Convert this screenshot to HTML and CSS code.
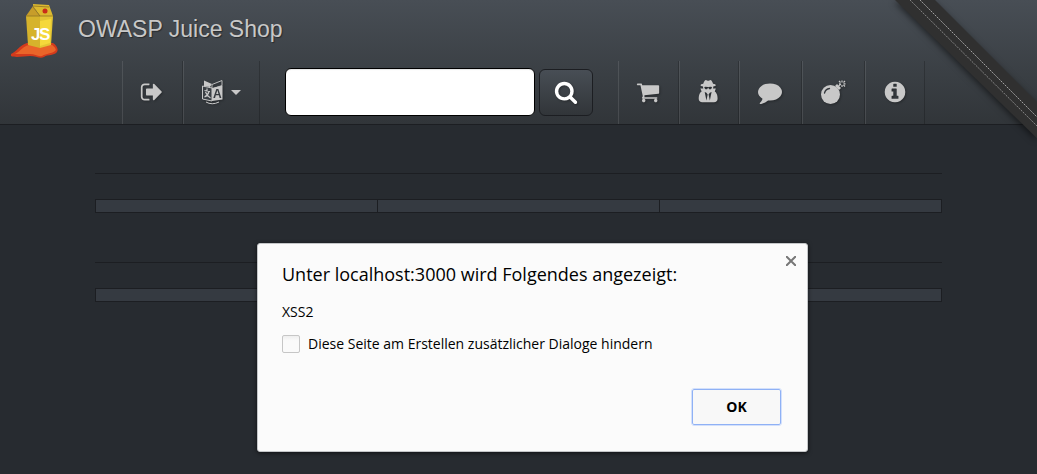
FILE: index.html
```html
<!DOCTYPE html>
<html lang="de">
<head>
<meta charset="utf-8">
<meta name="viewport" content="width=device-width, initial-scale=1">
<title>OWASP Juice Shop</title>
<link rel="stylesheet" href="styles.css">
</head>
<body>
<header class="navbar">
  <a class="brand" href="#">
    <svg class="brand-logo" viewBox="0 0 48 54" aria-hidden="true">
      <path fill="#d33a1c" d="M0 50 C5 48 9 41 16 39 L42 39 C45 41 48 45 46 48 C43 52 37 50 33 53 C29 55 25 52 19 52 C13 52 5 54 0 52Z"/>
      <path fill="#ea6529" d="M4 50 C10 47 12 42 18 41 L41 41 C44 43 46 46 44 47 C40 50 36 49 31 52 C27 53 24 50 19 50Z"/>
      <path fill="#d6b32c" d="M15 12 L29 12 L29 44 L17 41Z"/>
      <path fill="#e3c534" d="M29 12 L42 12 L40 41 L29 44Z"/>
      <path fill="#f5d83b" d="M29 17 L40 15 L39 39 L29 42Z"/>
      <path fill="#c79d2a" d="M22 2 L15 12 L29 12Z"/>
      <path fill="#dcb92f" d="M22 2 L22 0 L38 1 L42 12 L29 12Z"/>
      <path fill="none" stroke="#8f7424" stroke-width=".8" d="M15 12H42 M22 3L29 12 M22 2L38 3"/>
      <circle cx="34" cy="7" r="2.500" fill="#c92d19"/>
      <text class="brand-mark" x="20" y="36">J</text>
      <text class="brand-mark" x="28" y="36">S</text>
    </svg>
    <span class="brand-name">OWASP Juice Shop</span>
  </a>
  <nav class="nav" aria-label="Navigation">
    <ul class="nav-list">
      <li class="nav-item"><a class="nav-link" href="#" aria-label="Logout">
        <svg class="icon" viewBox="0 0 1792 1792"><path d="M704 1440q0 4 1 20t.5 26.5-3 23.5-10 19.500-20.500 6.500h-320q-119 0-203.500-84.500t-84.500-203.500v-704q0-119 84.500-203.500t203.500-84.500h320q13 0 22.500 9.500t9.500 22.500q0 4 1 20t.5 26.500-3 23.500-10 19.500-20.500 6.500h-320q-66 0-113 47t-47 113v704q0 66 47 113t113 47h312l11.500 1 11.500 3 8 5.500 7 9 2 13.500zm928-544q0 26-19 45l-544 544q-19 19-45 19t-45-19-19-45v-288h-448q-26 0-45-19t-19-45v-384q0-26 19-45t45-19h448v-288q0-26 19-45t45-19 45 19l544 544q19 19 19 45z"/></svg>
      </a></li>
      <li class="nav-item"><button class="nav-link nav-link-menu" type="button" aria-label="Sprache">
        <svg class="icon" viewBox="2 1 24 24">
          <path d="M12 5.500 22 1.500V6.500L12 10Z" fill="none" stroke="#c8c8c8" stroke-width=".9"/>
          <path d="M4 1.500 12 5 10 8 4 7Z"/>
          <path d="M2.500 7 12 9V22L2.500 20Z" fill="#3a3f44" stroke="#c8c8c8"/>
          <path d="M12 9 22.500 6.500V20.500L12 22Z"/>
          <path d="M6 23Q12 26.500 19 23" fill="none" stroke="#c8c8c8"/>
          <path d="M4.500 11.500 10 12.500M7 9.500V12M9 12.500Q8 16.500 4.500 18M5.500 13Q7 17 10.500 19" fill="none" stroke="#c8c8c8" stroke-width="1.200"/>
          <text class="icon-letter" x="13" y="19">A</text>
        </svg>
        <span class="caret"></span>
      </button></li>
    </ul>
    <form class="search" role="search">
      <input class="search-input" type="text" aria-label="Suche">
      <button class="search-button" type="button" aria-label="Suchen">
        <svg class="icon icon-search" viewBox="0 0 1792 1792"><path d="M1216 832q0-185-131.500-316.500t-316.500-131.500-316.500 131.500-131.500 316.500 131.500 316.500 316.500 131.500 316.500-131.500 131.500-316.500zm512 832q0 52-38 90t-90 38q-54 0-90-38l-343-342q-179 124-399 124-143 0-273.500-55.500t-225-150-150-225-55.500-273.500 55.500-273.500 150-225 225-150 273.500-55.500 273.500 55.500 225 150 150 225 55.500 273.500q0 220-124 399l343 343q37 37 37 90z"/></svg>
      </button>
    </form>
    <ul class="nav-list">
      <li class="nav-item"><a class="nav-link" href="#" aria-label="Warenkorb">
        <svg class="icon" viewBox="0 0 1792 1792"><path d="M704 1536q0 52-38 90t-90 38-90-38-38-90 38-90 90-38 90 38 38 90zm896 0q0 52-38 90t-90 38-90-38-38-90 38-90 90-38 90 38 38 90zm128-1088v512q0 24-16.500 42.500t-40.500 21.500l-1044 122q13 60 13 70 0 16-24 64h920q26 0 45 19t19 45-19 45-45 19h-1024q-26 0-45-19t-19-45q0-11 8-31.500t16-36 21.500-40 15.500-29.500l-177-823h-204q-26 0-45-19t-19-45 19-45 45-19h256q16 0 28.500 6.500t19.500 15.500 13 24.500 8 26 5.500 29.500 4.500 26h1201q26 0 45 19t19 45z"/></svg>
      </a></li>
      <li class="nav-item"><a class="nav-link nav-link-narrow" href="#" aria-label="Profil">
        <svg class="icon" viewBox="0 0 1792 1792"><path d="M704 1536l96-448-96-128-128-64zm256 0l128-640-128 64-96 128zm160-1010q-2-4-4-6-10-8-96-8-70 0-167 19-7 2-21 2t-21-2q-97-19-167-19-86 0-96 8-2 2-4 6 2 18 4 27 2 3 7.500 6.500t7.500 10.500q2 4 7.500 20.500t7 20.500 7.500 17 8.500 17 9 14 12 13.500 14 9.500 17.500 8 20.500 4 24.500 2q36 0 59-12.500t32.500-30 14.500-34.500 11.500-29.500 17.500-12.500h12q11 0 17.500 12.500t11.500 29.500 14.500 34.500 32.500 30 59 12.500q13 0 24.500-2t20.500-4 17.500-8 14-9.500 12-13.500 9-14 8.500-17 7.500-17 7-20.500 7.500-20.500q2-7 7.500-10.500t7.500-6.500q2-9 4-27zm416 879q0 121-73 190t-194 69h-874q-121 0-194-69t-73-190q0-61 4.500-118t19-125.500 37.500-123.500 63.500-103.500 93.500-74.500l-90-220h214q-22-64-22-128 0-12 2-32-194-40-194-96 0-57 210-99 17-62 51.500-134t70.500-114q32-37 76-37 30 0 84 31t84 31 84-31 84-31q44 0 76 37 36 42 70.500 114t51.500 134q210 42 210 99 0 56-194 96 7 81-20 160h214l-82 225q63 33 107.500 96.500t65.500 143.500 29 151.500 8 148.500z"/></svg>
      </a></li>
      <li class="nav-item"><a class="nav-link nav-link-wide" href="#" aria-label="Feedback">
        <svg class="icon" viewBox="0 0 1792 1792"><path d="M1792 896q0 174-120 321.500t-326 233-450 85.500q-70 0-145-8-198 175-460 242-49 14-114 22-17 2-30.500-9t-17.500-29v-1q-3-4-.5-12t2-10 4.500-9.500l6-9 7-8.500 8-9q7-8 31-34.500t34.500-38 31-39.500 32.500-51 27-59 26-76q-157-89-247.500-220t-90.500-281q0-130 71-248.500t191-204.500 286-136.500 348-50.500q244 0 450 85.500t326 233 120 321.500z"/></svg>
      </a></li>
      <li class="nav-item"><a class="nav-link nav-link-wide" href="#" aria-label="Beschwerde">
        <svg class="icon" viewBox="0 0 24 24">
          <circle cx="9.500" cy="14.500" r="9.500"/>
          <path d="M14 6 16 4 20 8 18 10Z"/>
          <path d="M3.500 13Q4.500 9 8.500 8.500" fill="none" stroke="#35393e" stroke-width="1.300" stroke-linecap="round"/>
          <path d="M17.500 6 20 4M21 .5V2.500M21 5V7M18 1 19.500 2.500M22.500 5 24 6.500M22.500 2.500 24 1M18 3.800H19.500M22.500 3.800H24.500" fill="none" stroke="#c8c8c8" stroke-width="1.200"/>
        </svg>
      </a></li>
      <li class="nav-item"><a class="nav-link nav-link-narrow" href="#" aria-label="Über uns">
        <svg class="icon" viewBox="0 0 1792 1792"><path d="M1152 1376v-160q0-14-9-23t-23-9h-96v-512q0-14-9-23t-23-9h-320q-14 0-23 9t-9 23v160q0 14 9 23t23 9h96v320h-96q-14 0-23 9t-9 23v160q0 14 9 23t23 9h448q14 0 23-9t9-23zm-128-896v-160q0-14-9-23t-23-9h-192q-14 0-23 9t-9 23v160q0 14 9 23t23 9h192q14 0 23-9t9-23zm640 416q0 209-103 385.500t-279.500 279.500-385.500 103-385.500-103-279.500-279.500-103-385.500 103-385.500 279.500-279.500 385.500-103 385.500 103 279.500 279.500 103 385.500z"/></svg>
      </a></li>
    </ul>
  </nav>
</header>

<svg class="ribbon" viewBox="0 0 150 150" aria-hidden="true">
  <path class="ribbon-band" d="M8 0H48L160 112V148Z"/>
  <path class="ribbon-stitch ribbon-stitch-dim" d="M23 0 150 126"/>
  <path class="ribbon-stitch" d="M33 0 150 117"/>
</svg>

<main class="content">
  <section class="panel">
    <hr class="rule">
    <table class="grid-table"><tbody><tr><th></th><th></th><th></th></tr></tbody></table>
  </section>
  <section class="panel">
    <hr class="rule">
    <table class="grid-table"><tbody><tr><th></th><th></th><th></th></tr></tbody></table>
  </section>
</main>

<div class="overlay">
  <div class="dialog" role="alertdialog" aria-labelledby="dialog-title" aria-describedby="dialog-message">
    <button class="dialog-close" type="button" aria-label="Schließen">
      <svg class="close-icon" viewBox="0 0 10 10"><path d="M0 0 10 10M10 0 0 10"/></svg>
    </button>
    <h1 class="dialog-title" id="dialog-title">Unter localhost:3000 wird Folgendes angezeigt:</h1>
    <p class="dialog-message" id="dialog-message">XSS2</p>
    <div class="dialog-option">
      <input class="checkbox" type="checkbox" id="suppress">
      <label for="suppress">Diese Seite am Erstellen zusätzlicher Dialoge hindern</label>
    </div>
    <div class="dialog-actions"><button class="dialog-ok" type="button">OK</button></div>
  </div>
</div>
</body>
</html>
```
FILE: styles.css
```css
* { box-sizing: border-box; }

body {
  margin: 0;
  min-height: 100vh;
  position: relative;
  overflow-x: hidden;
  background: #272b30;
  color: #c8c8c8;
  font-family: "Liberation Sans", Arial, sans-serif;
}

.navbar {
  background: linear-gradient(#484e55, #3a3f44 60%, #313539);
  border-bottom: 1px solid #1c1e22;
}

.brand {
  display: flex;
  align-items: center;
  gap: 19px;
  width: max-content;
  height: 61px;
  padding-left: 11px;
  color: #c8c8c8;
  text-decoration: none;
  text-shadow: 1px 1px 1px rgba(0, 0, 0, .4);
}

.brand-logo { width: 48px; height: 54px; }

.brand-mark {
  fill: #fff;
  font-size: 17px;
  font-weight: bold;
  text-shadow: none;
}

.brand-name { font-size: 23px; line-height: 28px; padding-bottom: 4px; }

.nav {
  display: flex;
  align-items: center;
  justify-content: center;
  gap: 25px;
  height: 63px;
  padding-left: 9px;
}

.nav-list {
  display: flex;
  align-self: stretch;
  margin: 0;
  padding: 0;
  list-style: none;
}

.nav-item {
  display: flex;
  padding-bottom: 1px;
  border-left: 1px solid rgba(255, 255, 255, .1);
  border-right: 1px solid rgba(0, 0, 0, .2);
}

.nav-link {
  display: flex;
  align-items: center;
  justify-content: center;
  width: 59px;
  padding: 0;
  border: 0;
  background: none;
}

.nav-link-menu { width: 75px; gap: 5px; }
.nav-link-narrow { width: 58px; }
.nav-link-wide { width: 61px; }

.icon {
  width: 24px;
  height: 24px;
  overflow: visible;
  fill: #c8c8c8;
  filter: drop-shadow(1px 1px 1px rgba(0, 0, 0, .3));
}

.icon-search { fill: #fff; }

.icon-letter {
  fill: #35393e;
  font-size: 12px;
  font-weight: bold;
  font-family: "Liberation Sans", Arial, sans-serif;
}

.caret {
  border-top: 5px solid #c8c8c8;
  border-left: 5px solid transparent;
  border-right: 5px solid transparent;
}

.search { display: flex; align-items: flex-end; gap: 4px; padding-bottom: 2px; }

.search-input {
  width: 250px;
  height: 48px;
  padding: 8px 12px;
  border: 1px solid #000;
  border-radius: 6px;
  background: #fff;
  box-shadow: inset 0 1px 1px rgba(0, 0, 0, .1);
  font-size: 18px;
}

.search-button {
  display: flex;
  align-items: center;
  justify-content: center;
  width: 54px;
  height: 47px;
  padding: 0;
  border: 1px solid #1c1e22;
  border-radius: 6px;
  background: linear-gradient(#484e55, #3a3f44 60%, #313539);
}

.ribbon {
  position: absolute;
  top: 0;
  right: 0;
  width: 150px;
  height: 150px;
  filter: drop-shadow(-1px 2px 3px rgba(0, 0, 0, .5));
}

.ribbon-band { fill: #303030; }
.ribbon-stitch { stroke: #a0a0a0; stroke-width: 1; stroke-dasharray: 2 1; }
.ribbon-stitch-dim { stroke: #858585; }

.content { padding: 0 95px; }
.panel { padding-top: 48px; }
.panel + .panel { padding-top: 49px; }

.rule {
  height: 1px;
  margin: 0 0 25px;
  border: 0;
  background: #1c1e22;
}

.grid-table {
  width: 100%;
  table-layout: fixed;
  border-collapse: collapse;
}

.grid-table th {
  height: 13px;
  padding: 0;
  border: 1px solid #1c1e22;
  background: #353a41;
}

.overlay {
  position: absolute;
  inset: 0;
  display: flex;
  align-items: flex-start;
  justify-content: center;
  padding: 243px 0 0 28px;
}

.dialog {
  position: relative;
  width: 551px;
  padding: 18px 26px 26px 24px;
  border: 1px solid #c4c6c8;
  border-radius: 3px;
  background: #fbfbfb;
  color: #000;
  box-shadow: 0 1px 4px rgba(0, 0, 0, .6);
  font-family: "Open Sans", "Noto Sans", sans-serif;
  font-size: 14px;
  line-height: 20px;
}

.dialog-close {
  position: absolute;
  top: 9px;
  right: 8px;
  display: flex;
  padding: 3px;
  border: 0;
  background: none;
}

.close-icon { width: 10px; height: 10px; stroke: #777; stroke-width: 2; }

.dialog-title { margin: 0; font-size: 18px; font-weight: 400; line-height: 24px; }
.dialog-message { margin: 16px 0 12px; }
.dialog-option { display: flex; align-items: center; gap: 8px; }

.checkbox {
  appearance: none;
  width: 18px;
  height: 18px;
  margin: 0;
  border: 1px solid #c6c6c6;
  border-radius: 2px;
  background: linear-gradient(#eee, #fafafa 30%);
}

.dialog-actions { display: flex; justify-content: flex-end; margin-top: 35px; }

.dialog-ok {
  width: 89px;
  height: 36px;
  border: 1px solid #8fb1f5;
  border-radius: 2px;
  outline: 1px solid #d3e0fb;
  background: #f8f8f8;
  color: #000;
  font: bold 14px/20px "Open Sans", "Noto Sans", sans-serif;
}
```
